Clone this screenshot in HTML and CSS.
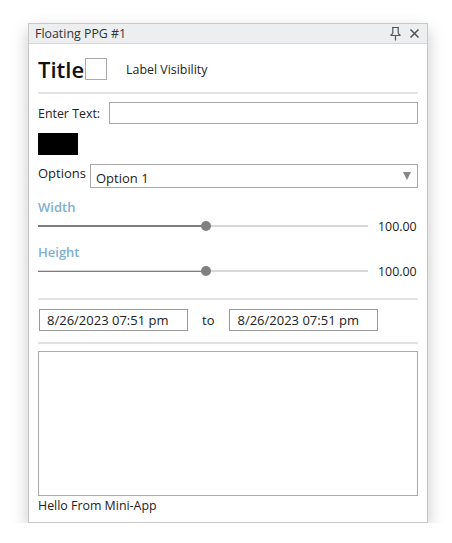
FILE: index.html
```html
<!DOCTYPE html>
<html>
<head>
<meta charset="utf-8">
<link rel="stylesheet" href="styles.css">
</head>
<body>
<div class="window">
  <div class="titlebar">
    <span class="title-text">Floating PPG #1</span>
    <span class="title-icons">
      <svg width="13" height="15" viewBox="0 0 13 15"><path d="M3 1.5h7M3.8 1.5v6M9.2 1.5v6M1.5 9.5h10M3.8 7.5l-2.3 2M9.2 7.5l2.3 2M6.5 9.5v5" fill="none" stroke="#555" stroke-width="1.2"/></svg>
      <svg width="11" height="11" viewBox="0 0 11 11"><path d="M1.5 1.5l8 8M9.5 1.5l-8 8" stroke="#555" stroke-width="1.6"/></svg>
    </span>
  </div>
  <div class="content">
    <div class="row-title">
      <span class="big-title">Title</span><span class="checkbox"></span>
      <span class="label-vis">Label Visibility</span>
    </div>
    <div class="sep"></div>
    <div class="row-text">
      <span class="lbl">Enter Text:</span>
      <div class="textbox"></div>
    </div>
    <div class="swatch"></div>
    <div class="row-options">
      <span class="lbl">Options</span>
      <div class="select"><span>Option 1</span><span class="arrow"></span></div>
    </div>
    <div class="slider-label first">Width</div>
    <div class="slider-row">
      <div class="track"><div class="fill"></div><div class="thumb"></div></div>
      <span class="val">100.00</span>
    </div>
    <div class="slider-label">Height</div>
    <div class="slider-row">
      <div class="track thin"><div class="fill"></div><div class="thumb"></div></div>
      <span class="val">100.00</span>
    </div>
    <div class="sep sep2"></div>
    <div class="row-dates">
      <div class="date">8/26/2023 07:51 pm</div>
      <span class="to">to</span>
      <div class="date">8/26/2023 07:51 pm</div>
    </div>
    <div class="sep sep3"></div>
    <div class="textarea"></div>
    <div class="hello">Hello From Mini-App</div>
  </div>
</div>
</body>
</html>
```
FILE: styles.css
```css
html, body { margin: 0; padding: 0; background: #fff; }
body { font-family: "Open Sans", "Noto Sans", sans-serif; font-size: 12.4px; color: #222; padding: 23px 0 0 28px; }
.window { width: 398px; height: 498px; border: 1px solid #c8c8c8; background: #fff; box-shadow: 0 7px 16px rgba(0,0,0,0.22); display: flex; flex-direction: column; }
.titlebar { height: 19px; background: #eceeef; border-bottom: 1px solid #d4d6d8; display: flex; align-items: center; justify-content: space-between; padding: 0 7px 0 6px; }
.title-text { font-size: 12.4px; color: #333; }
.title-icons { display: flex; align-items: center; gap: 7px; }
.title-icons svg { display: block; }
.content { padding: 13px 9px 0 9px; display: flex; flex-direction: column; }
.row-title { display: flex; align-items: center; height: 24px; }
.big-title { font-size: 22px; font-weight: 600; color: #111; line-height: 24px; }
.checkbox { width: 20px; height: 20px; border: 1px solid #aaa; margin-left: 1px; }
.label-vis { margin-left: 19px; font-size: 12.4px; }
.sep { height: 2px; background: #e2e2e2; margin-top: 11px; }
.row-text { display: flex; align-items: center; margin-top: 8px; height: 22px; }
.lbl { font-size: 12.4px; }
.textbox { margin-left: 9px; flex: 1; height: 20px; border: 1px solid #a8a8a8; }
.swatch { width: 40px; height: 22px; background: #000; margin-top: 9px; }
.row-options { display: flex; align-items: flex-start; margin-top: 9px; }
.row-options .lbl { margin-top: 0; font-size: 13px; }
.select { margin-left: 4px; flex: 1; height: 22px; border: 1px solid #a8a8a8; display: flex; align-items: center; justify-content: space-between; padding: 0 6px 0 5px; font-size: 13px; }
.select span:first-child { margin-top: 3px; }
.arrow { width: 0; height: 0; border-left: 4.5px solid transparent; border-right: 4.5px solid transparent; border-top: 8px solid #888; }
.slider-label { color: #80b0d2; font-size: 13px; font-weight: 600; margin-top: 9px; line-height: 17px; }
.slider-label.first { margin-top: 11px; }
.slider-row { display: flex; align-items: center; height: 18px; margin-top: 1px; }
.track { position: relative; width: 330px; height: 2px; background: #d8d8d8; }
.fill { width: 168px; height: 100%; background: #7d7d7d; }
.thin .fill { height: 1px; margin-top: 0.5px; }
.thumb { position: absolute; left: 163px; top: -4px; width: 10px; height: 10px; border-radius: 50%; background: #808080; }
.val { margin-left: 10px; font-size: 12.4px; }
.sep2 { margin-top: 18px; }
.row-dates { display: flex; align-items: center; margin-top: 9px; }
.date { width: 140px; height: 20px; border: 1px solid #999; padding-left: 7px; font-size: 13px; line-height: 20px; margin-left: 1px; }
.to { margin: 0 14px 0 14px; font-size: 13px; }
.sep3 { margin-top: 11px; }
.textarea { height: 143px; border: 1px solid #aaa; margin-top: 7px; }
.hello { font-size: 12.4px; margin-top: 1px; }
```
